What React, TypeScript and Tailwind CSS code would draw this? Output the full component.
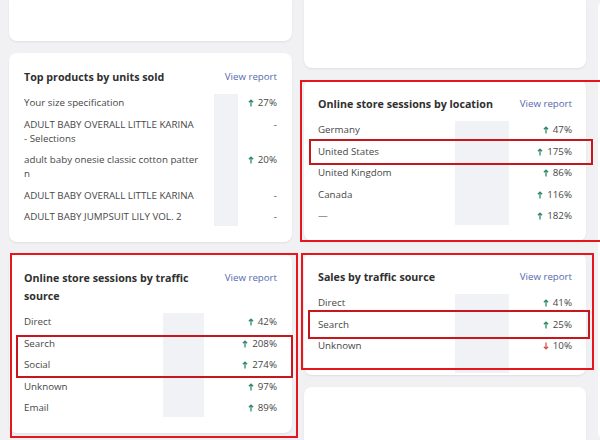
import React from "react";

type Row = { label: React.ReactNode; value?: string; dir?: "up" | "down" };

function Arrow({ dir }: { dir: "up" | "down" }) {
    const color = dir === "up" ? "#2f8a6c" : "#d9534f";
    return (
        <svg width="6" height="8" viewBox="0 0 6 8" className="shrink-0">
            {dir === "up" ? (
                <path d="M3 7.6V1.2M0.9 3.3L3 1.1L5.1 3.3" stroke={color} strokeWidth="1.3" fill="none" />
            ) : (
                <path d="M3 0.4V6.8M0.9 4.7L3 6.9L5.1 4.7" stroke={color} strokeWidth="1.3" fill="none" />
            )}
        </svg>
    );
}

function ReportCard({ title, rows, cols, padX, pb = "pb-[18px]", bar = "row-span-5 -my-[2px]" }: {
    title: React.ReactNode; rows: Row[]; cols: string; padX: string; pb?: string; bar?: string;
}) {
    return (
        <div className={`bg-white rounded-lg shadow-[0_1px_2px_rgba(0,0,0,0.08)] pt-[15px] ${pb} ${padX}`}>
            <div className="flex items-start justify-between">
                <h2 className="text-[10.7px] leading-[18px] font-bold text-[#303030] max-w-[200px]">{title}</h2>
                <a className="text-[9.7px] leading-[18px] text-[#5569b2] whitespace-nowrap">View report</a>
            </div>
            <div className={`grid ${cols} gap-y-[7.5px] mt-[10px] text-[9.75px] leading-[14px] text-[#474747]`}>
                <div className={`col-start-2 row-start-1 bg-[#f1f2f6] ${bar}`} />
                {rows.map((r, i) => (
                    <React.Fragment key={i}>
                        <div className="col-start-1 pr-2">{r.label}</div>
                        <div className="col-start-3 flex items-center justify-end gap-[4px] h-[14px]">
                            {r.dir && <Arrow dir={r.dir} />}
                            <span>{r.value ?? "-"}</span>
                        </div>
                    </React.Fragment>
                ))}
            </div>
        </div>
    );
}

const topProducts: Row[] = [
    { label: "Your size specification", value: "27%", dir: "up" },
    { label: <>ADULT BABY OVERALL LITTLE KARINA<br />- Selections</> },
    { label: <>adult baby onesie classic cotton patter<br />n</>, value: "20%", dir: "up" },
    { label: "ADULT BABY OVERALL LITTLE KARINA" },
    { label: "ADULT BABY JUMPSUIT LILY VOL. 2" },
];

const byTraffic: Row[] = [
    { label: "Direct", value: "42%", dir: "up" },
    { label: "Search", value: "208%", dir: "up" },
    { label: "Social", value: "274%", dir: "up" },
    { label: "Unknown", value: "97%", dir: "up" },
    { label: "Email", value: "89%", dir: "up" },
];

const byLocation: Row[] = [
    { label: "Germany", value: "47%", dir: "up" },
    { label: "United States", value: "175%", dir: "up" },
    { label: "United Kingdom", value: "86%", dir: "up" },
    { label: "Canada", value: "116%", dir: "up" },
    { label: "—", value: "182%", dir: "up" },
];

const salesTraffic: Row[] = [
    { label: "Direct", value: "41%", dir: "up" },
    { label: "Search", value: "25%", dir: "up" },
    { label: "Unknown", value: "10%", dir: "down" },
];

export default function App() {
    return (
        <div className="relative w-[600px] h-[440px] overflow-hidden bg-[#f1f1f3] font-['Open_Sans','Noto_Sans',sans-serif]">
            <div className="flex gap-[12px] pl-[9px]">
                <div className="w-[283px] shrink-0 flex flex-col gap-[12px]">
                    <div className="h-[41px] bg-white rounded-b-lg shadow-[0_1px_2px_rgba(0,0,0,0.08)]" />
                    <ReportCard title="Top products by units sold" rows={topProducts} cols="grid-cols-[190px_24px_1fr]" padX="px-[15px]" />
                    <ReportCard title="Online store sessions by traffic source" rows={byTraffic} cols="grid-cols-[139px_41px_1fr]" padX="px-[15px]" />
                </div>
                <div className="w-[282px] shrink-0 flex flex-col gap-[12px]">
                    <div className="h-[68px] bg-white rounded-b-lg shadow-[0_1px_2px_rgba(0,0,0,0.08)]" />
                    <ReportCard title="Online store sessions by location" rows={byLocation} cols="grid-cols-[137px_54px_1fr]" padX="px-[14px]" />
                    <ReportCard title="Sales by traffic source" rows={salesTraffic} cols="grid-cols-[137px_54px_1fr]" padX="px-[14px]" pb="pb-[22px]" bar="row-span-3 -mt-[2px] -mb-[20px]" />
                    <div className="h-[80px] bg-white rounded-t-lg shadow-[0_1px_2px_rgba(0,0,0,0.08)]" />
                </div>
                <div className="w-[40px] shrink-0 flex flex-col">
                    <div className="h-[440px] bg-white rounded-lg" />
                </div>
            </div>

            {/* annotation boxes */}
            <div className="absolute left-[300px] top-[80px] w-[310px] h-[162px] border-2 border-[#e5161c]" />
            <div className="absolute left-[309px] top-[139px] w-[284px] h-[26px] border-2 border-[#c8161c]" />
            <div className="absolute left-[10px] top-[253px] w-[288px] h-[185px] border-2 border-[#e5161c]" />
            <div className="absolute left-[16px] top-[335px] w-[277px] h-[43px] border-2 border-[#c8161c]" />
            <div className="absolute left-[301px] top-[253px] w-[293px] h-[117px] border-2 border-[#e5161c]" />
            <div className="absolute left-[308px] top-[310px] w-[282px] h-[29px] border-2 border-[#c8161c]" />
        </div>
    );
}
